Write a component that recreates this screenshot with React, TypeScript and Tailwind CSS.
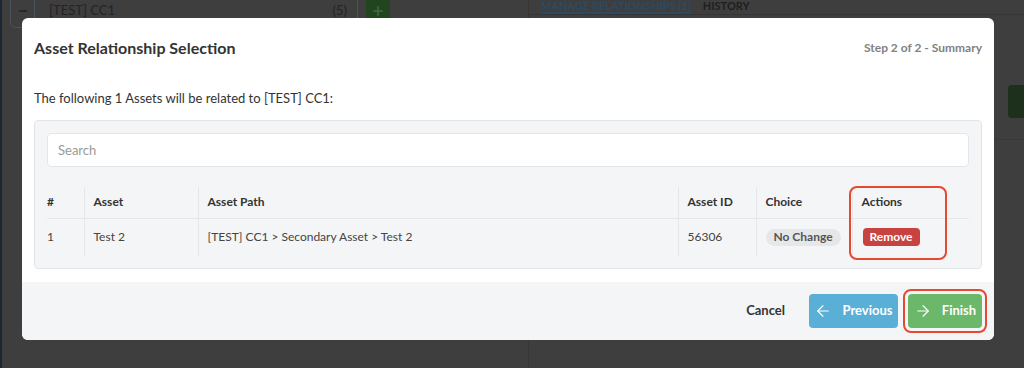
import React from 'react';
import { ArrowLeft, ArrowRight, Plus, Minus } from 'lucide-react';

const font = { fontFamily: 'Lato, "Open Sans", sans-serif' };

// Background page, dimmed behind the modal overlay
function Backdrop() {
  return (
    <div className="flex h-full w-full">
      <div className="w-[2px] bg-[#1d2733]" />
      <div className="flex w-[527px] flex-col border-r border-[#363636] pl-[8px]">
        <div className="mt-[-6px] flex items-start gap-2">
          <div className="flex h-[34px] w-[348px] items-center rounded-md border border-[#4a525a]">
            <div className="flex h-full w-[24px] items-center justify-center border-r border-[#4a525a] text-[#222]">
              <Minus size={12} strokeWidth={3} />
            </div>
            <span className="ml-[14px] flex-1 text-[13px] text-[#242424]">[TEST] CC1</span>
            <span className="mr-[10px] text-[13px] text-[#242424]">(5)</span>
          </div>
          <div className="mt-[4px] flex h-[26px] w-[24px] items-center justify-center rounded bg-[#22441f] text-[#3d6a3a]">
            <Plus size={14} strokeWidth={3} />
          </div>
        </div>
      </div>
      <div className="flex flex-1 flex-col">
        <div className="flex h-[15px] items-start gap-3 border-b border-[#363636] pl-[12px]">
          <span className="border-b-2 border-[#2a4a63] pb-[1px] text-[11px] font-bold leading-[11px] text-[#2c4a63]">
            MANAGE RELATIONSHIPS (1)
          </span>
          <span className="text-[11px] font-bold leading-[11px] text-[#1e1e1e]">HISTORY</span>
        </div>
        <div className="mt-[70px] flex justify-end">
          <div className="h-[33px] w-[16px] rounded-l bg-[#1d301c]" />
        </div>
        <div className="mt-[21px] border-b border-[#393939]" />
      </div>
    </div>
  );
}

const cols = ['#', 'Asset', 'Asset Path', 'Asset ID', 'Choice', 'Actions'];
const widths = ['w-[37px]', 'w-[114px]', 'w-[480px]', 'w-[78px]', 'w-[96px]', 'w-[117px]'];

export default function App() {
  return (
    <div className="relative h-[368px] w-[1024px] overflow-hidden bg-[#3e3e3e]" style={font}>
      <Backdrop />

      <div className="absolute left-[22px] top-[18px] flex h-[322px] w-[972px] flex-col overflow-hidden rounded-md bg-white">
        <div className="flex h-[60px] items-center justify-between px-3">
          <h1 className="text-[16px] font-bold text-[#333]">Asset Relationship Selection</h1>
          <span className="text-[12px] font-bold text-[#818181]">Step 2 of 2 - Summary</span>
        </div>

        <div className="flex-1 px-3">
          <p className="mt-[10px] text-[13px] leading-[20px] text-[#333]">
            The following 1 Assets will be related to [TEST] CC1:
          </p>

          <div className="relative mt-3 rounded border border-[#e2e4e7] bg-[#f4f5f7] p-3">
            <input
              placeholder="Search"
              className="h-[34px] w-full rounded border border-[#e3e5e8] bg-white px-[10px] text-[13px] text-[#333] placeholder-[#9a9a9a] outline-none"
            />
            <table className="mt-[20px] w-full table-fixed border-collapse text-[12px] text-[#333]">
              <thead>
                <tr className="h-[31px] border-b border-[#e4e6e9]">
                  {cols.map((c, i) => (
                    <th
                      key={c}
                      className={`${widths[i]} text-left font-bold ${i === 0 ? 'pl-0' : 'border-l border-[#e4e6e9] pl-[9px]'}`}
                    >
                      {c}
                    </th>
                  ))}
                </tr>
              </thead>
              <tbody>
                <tr className="h-[38px] text-[#444]">
                  <td>1</td>
                  <td className="border-l border-[#e4e6e9] pl-[9px]">Test 2</td>
                  <td className="border-l border-[#e4e6e9] pl-[9px]">[TEST] CC1 &gt; Secondary Asset &gt; Test 2</td>
                  <td className="border-l border-[#e4e6e9] pl-[9px]">56306</td>
                  <td className="border-l border-[#e4e6e9] pl-[9px]">
                    <span className="inline-flex h-[17px] items-center rounded-full bg-[#e6e7e9] px-[8px] font-bold text-[#555]">
                      No Change
                    </span>
                  </td>
                  <td className="border-l border-[#e4e6e9] pl-[10px]">
                    <button className="inline-flex h-[18px] items-center rounded-sm bg-[#c8423f] px-[7px] font-bold text-white">
                      Remove
                    </button>
                  </td>
                </tr>
              </tbody>
            </table>
            <div className="pointer-events-none absolute left-[814px] top-[65px] h-[74px] w-[98px] rounded-lg border-2 border-[#e5492f]" />
          </div>
        </div>

        <div className="flex h-[58px] items-center justify-end bg-[#f4f5f7] pr-3">
          <button className="mr-[24px] text-[13px] font-bold text-[#333]">Cancel</button>
          <button className="flex h-[34px] w-[89px] items-center justify-center gap-[10px] rounded-sm bg-[#5aafd7] text-[13px] font-bold text-white">
            <ArrowLeft size={18} strokeWidth={1.5} />
            Previous
          </button>
          <div className="relative ml-[10px]">
            <button className="flex h-[34px] w-[74px] items-center justify-center gap-[10px] rounded-sm bg-[#6bb86b] text-[13px] font-bold text-white">
              <ArrowRight size={18} strokeWidth={1.5} />
              Finish
            </button>
            <div className="pointer-events-none absolute left-[-5px] top-[-5px] h-[44px] w-[84px] rounded-lg border-2 border-[#e5492f]" />
          </div>
        </div>
      </div>
    </div>
  );
}
